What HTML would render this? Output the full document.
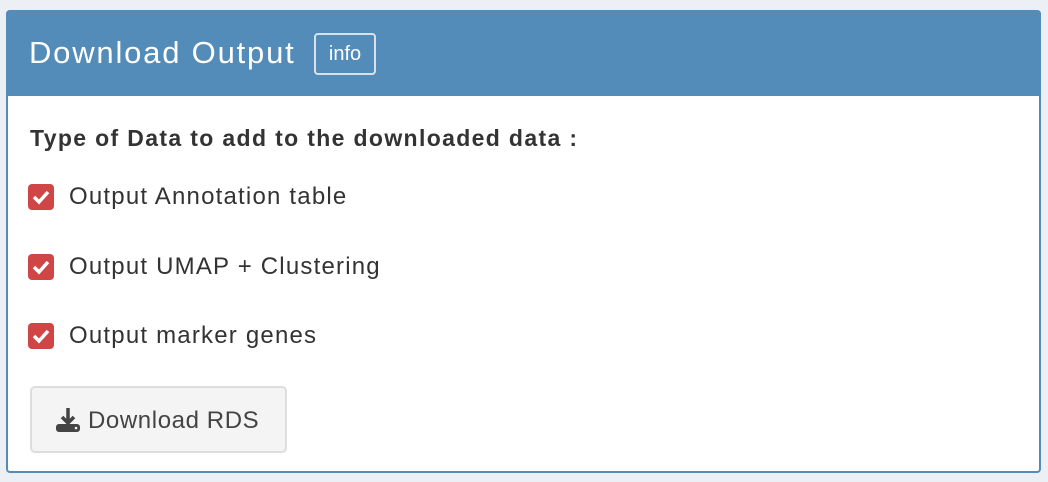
<!DOCTYPE html>
<html><head><style>
body{margin:0;background:#ecf0f5;width:1048px;height:482px;overflow:hidden;font-family:"Liberation Sans",sans-serif;color:#333}
.box{position:absolute;left:6px;top:10px;width:1035px;height:463px;background:#fff;border:2px solid #538bb9;border-top:none;border-radius:4px;box-sizing:border-box}
.hd{position:absolute;left:-2px;top:0;width:1035px;height:86px;background:#538bb9;border-radius:4px 4px 0 0}
.title{position:absolute;left:23px;top:25px;color:#fff;font-size:31px;letter-spacing:1.8px}
.info{position:absolute;left:308px;top:23px;width:62px;height:42px;border:2px solid #d8e2ec;border-radius:4px;box-sizing:border-box;color:#fff;font-size:20px;text-align:center;line-height:38px}
.lbl{position:absolute;left:22px;top:115px;font-weight:bold;font-size:23px;letter-spacing:1.35px}
.cb{position:absolute;left:20px;width:26px;height:26px;background:#d04545;border-radius:4px}
.cb svg{position:absolute;left:3px;top:3px}
.t{position:absolute;left:61px;font-size:24px;letter-spacing:1.2px}
.btn{position:absolute;left:22px;top:376px;width:257px;height:67px;background:#f4f4f4;border:2px solid #ddd;border-radius:5px;box-sizing:border-box;font-size:24px;color:#444}
</style></head><body>
<div class="box">
<div class="hd"><div class="title">Download Output</div><div class="info">info</div></div>
<div class="lbl">Type of Data to add to the downloaded data :</div>
<div class="cb" style="top:174px"><svg width="20" height="20" viewBox="0 0 20 20"><path d="M3 10l5 5 9-10" stroke="#fff" stroke-width="3.5" fill="none"/></svg></div>
<div class="t" style="top:173px">Output Annotation table</div>
<div class="cb" style="top:244px"><svg width="20" height="20" viewBox="0 0 20 20"><path d="M3 10l5 5 9-10" stroke="#fff" stroke-width="3.5" fill="none"/></svg></div>
<div class="t" style="top:243px">Output UMAP + Clustering</div>
<div class="cb" style="top:313px"><svg width="20" height="20" viewBox="0 0 20 20"><path d="M3 10l5 5 9-10" stroke="#fff" stroke-width="3.5" fill="none"/></svg></div>
<div class="t" style="top:312px">Output marker genes</div>
<div class="btn">
<svg style="position:absolute;left:22px;top:18px" width="28" height="28" viewBox="0 0 28 28"><path d="M14 2v14M8 11l6 6 6-6" stroke="#444" stroke-width="3.5" fill="none"/><rect x="2" y="18" width="24" height="8" rx="3" fill="#444"/><circle cx="22" cy="22" r="1.3" fill="#f4f4f4"/></svg>
<span style="position:absolute;left:56px;top:19px;letter-spacing:0.6px">Download RDS</span></div>
</div>
</body></html>
